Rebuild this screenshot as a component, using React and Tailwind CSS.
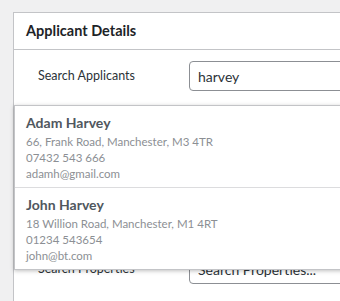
const applicants = [
  {
    id: 1,
    name: 'Adam Harvey',
    address: '66, Frank Road, Manchester, M3 4TR',
    phone: '07432 543 666',
    email: 'adamh@gmail.com',
  },
  {
    id: 2,
    name: 'John Harvey',
    address: '18 Willion Road, Manchester, M1 4RT',
    phone: '01234 543654',
    email: 'john@bt.com',
  },
]

function ResultItem({ item, last }) {
  return (
    <li className={`px-[11px] pt-[8px] ${last ? 'h-[81px]' : 'h-[82px] border-b border-[#dcdcde]'}`}>
      <div className="h-[18px] text-[14px] leading-[18px] font-bold text-[#50575e]">{item.name}</div>
      <div className="mt-[2px] h-[16px] text-[11.5px] leading-[16px] text-[#8c8f94]">{item.address}</div>
      <div className="h-[16px] text-[11.5px] leading-[16px] text-[#8c8f94]">{item.phone}</div>
      <div className="h-[16px] text-[11.5px] leading-[16px] text-[#8c8f94]">{item.email}</div>
    </li>
  )
}

export default function App() {
  return (
    <div
      className="h-[301px] w-[340px] overflow-hidden bg-[#f0f0f1] pl-[13px] pt-[12px]"
      style={{ fontFamily: 'Lato, "Noto Sans", sans-serif' }}
    >
      <div className="w-[420px] h-[320px] border border-[#c3c4c7] bg-white">
        <div className="h-[37px] flex items-center px-[12px] border-b border-[#c3c4c7]">
          <h2 className="text-[14.5px] font-bold text-[#1d2327]">Applicant Details</h2>
        </div>
        <div className="relative h-[260px] pt-[11px]">
          <div className="flex items-center h-[30px]">
            <label className="w-[175px] pl-[24px] text-[12.5px] text-[#2c3338]">Search Applicants</label>
            <input
              readOnly
              value="harvey"
              className="h-[30px] w-[220px] rounded-[4px] border border-[#8c8f94] px-[8px] text-[14px] text-[#2c3338] outline-none"
            />
          </div>
          <div className="flex items-center h-[30px] mt-[163px]">
            <label className="w-[175px] pl-[24px] text-[12.5px] text-[#2c3338]">Search Properties</label>
            <input
              readOnly
              placeholder="Search Properties..."
              className="h-[30px] w-[220px] rounded-[4px] border border-[#8c8f94] px-[8px] text-[14px] text-[#2c3338] placeholder:text-[#2c3338] outline-none"
            />
          </div>
          <ul className="absolute z-10 left-0 top-[55px] w-[400px] bg-white border border-[#c3c4c7] shadow-[0_1px_4px_rgba(0,0,0,0.25)]">
            {applicants.map((a, i) => (
              <ResultItem key={a.id} item={a} last={i === applicants.length - 1} />
            ))}
          </ul>
        </div>
      </div>
    </div>
  )
}
